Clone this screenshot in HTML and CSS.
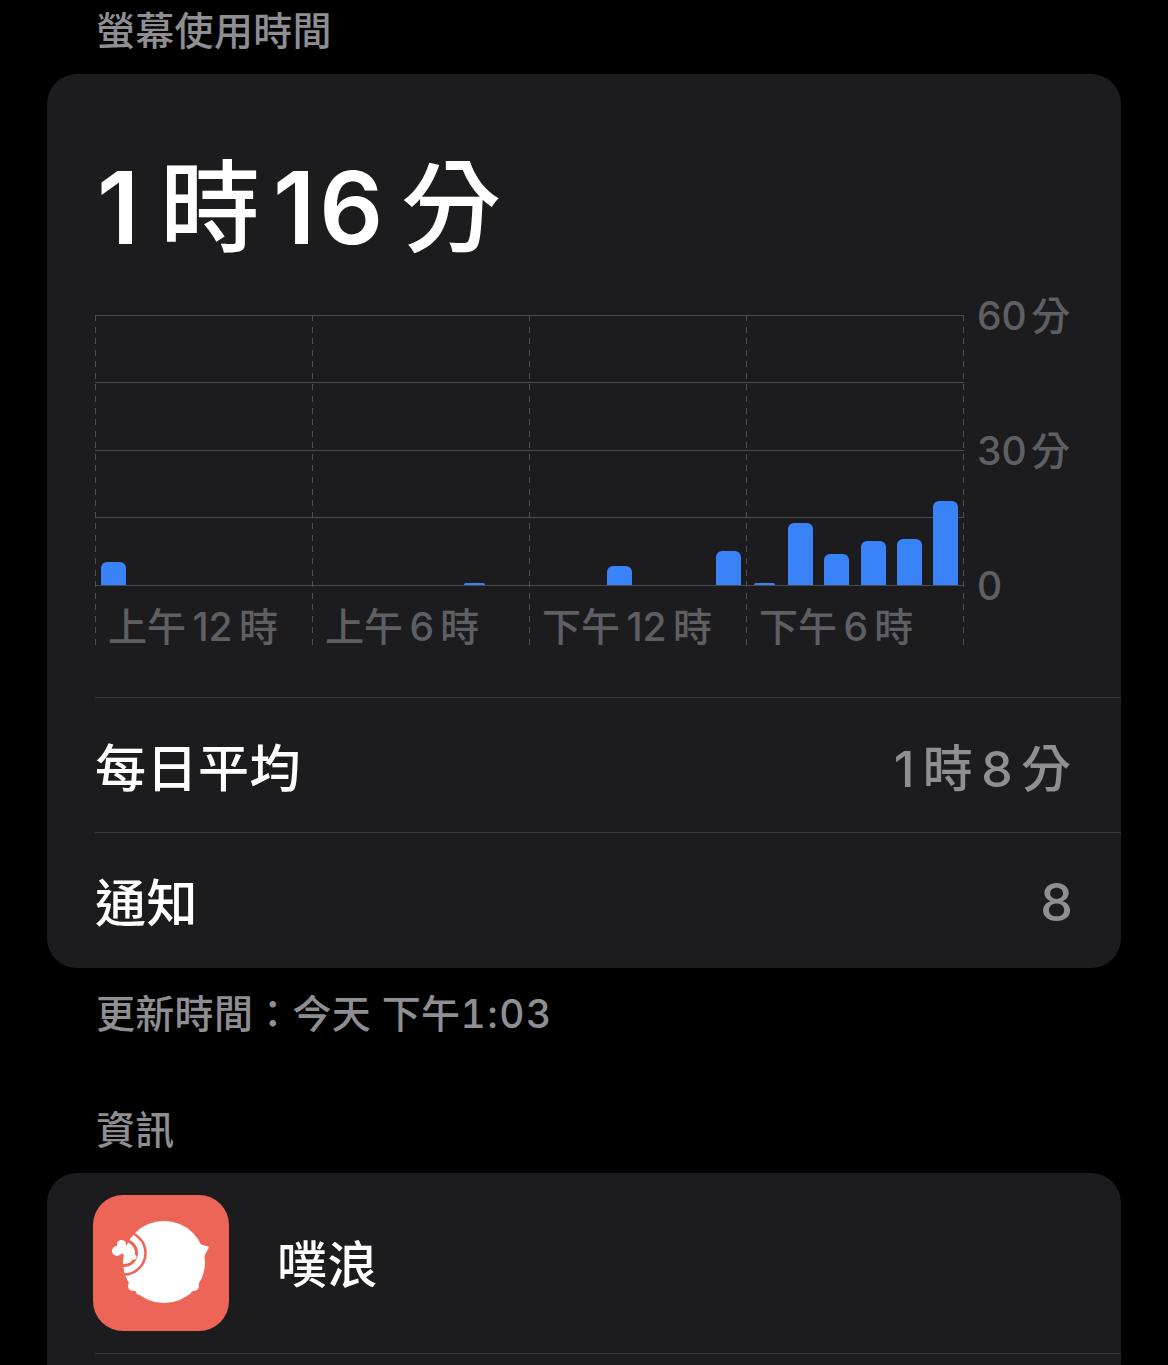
FILE: index.html
```html
<!DOCTYPE html>
<html lang="zh-Hant">
<head>
<meta charset="utf-8">
<title>螢幕使用時間</title>
<link rel="stylesheet" href="styles.css">
</head>
<body>
<main class="page">
  <h2 class="section-title first">螢幕使用時間</h2>
  <section class="card usage">
    <div class="total"><span class="one">1</span><span class="cjk">時</span><span class="num">16</span><span class="unit">分</span></div>
    <div class="chart">
      <div class="stage">
        <div class="hlines"><i></i><i></i><i></i><i></i></div>
        <div class="vlines"><i></i><i></i><i></i><i></i></div>
        <div class="bars">
          <b class="bar" style="--c:1;--h:23px"></b>
          <b class="bar thin" style="--c:11;--h:2px"></b>
          <b class="bar" style="--c:15;--h:19px"></b>
          <b class="bar" style="--c:18;--h:34px"></b>
          <b class="bar thin" style="--c:19;--h:2px"></b>
          <b class="bar" style="--c:20;--h:62px"></b>
          <b class="bar" style="--c:21;--h:31px"></b>
          <b class="bar" style="--c:22;--h:44px"></b>
          <b class="bar" style="--c:23;--h:46px"></b>
          <b class="bar" style="--c:24;--h:84px"></b>
        </div>
        <div class="xlabels">
          <span>上午 12 時</span><span>上午 6 時</span><span>下午 12 時</span><span>下午 6 時</span>
        </div>
      </div>
      <div class="yaxis">
        <span>60 分</span><span>30 分</span><span>0</span>
      </div>
    </div>
    <div class="row first-row"><span class="row-label">每日平均</span><span class="row-value">1 時 8 分</span></div>
    <div class="row"><span class="row-label">通知</span><span class="row-value solo">8</span></div>
  </section>
  <p class="footnote">更新時間：今天 下午<span class="clock">1:03</span></p>
  <h2 class="section-title info">資訊</h2>
  <section class="card app">
    <div class="app-row">
      <svg class="app-icon" viewBox="0 0 136 136" aria-hidden="true">
        <rect width="136" height="136" rx="30" fill="#ec6557"/>
        <path d="M107 49l9 3-5 10z" fill="#fff"/>
        <circle cx="40" cy="91" r="5" fill="#fff"/>
        <circle cx="47" cy="96" r="4" fill="#fff"/>
        <circle cx="101" cy="91" r="5" fill="#fff"/>
        <circle cx="94" cy="96" r="4" fill="#fff"/>
        <circle cx="71" cy="67" r="41" fill="#fff"/>
        <circle cx="31" cy="58" r="21.500" fill="none" stroke="#ec6557" stroke-width="2.500"/>
        <circle cx="31" cy="58" r="12.500" fill="none" stroke="#ec6557" stroke-width="3"/>
        <path d="M32 56l9 6" stroke="#fff" stroke-width="5" stroke-linecap="round"/>
        <circle cx="24" cy="56" r="5" fill="#fff"/>
        <circle cx="28.500" cy="49.500" r="4.500" fill="#fff"/>
        <circle cx="32" cy="55" r="4.500" fill="#fff"/>
      </svg>
      <span class="app-name">噗浪</span>
    </div>
    <div class="app-rule"></div>
  </section>
</main>
</body>
</html>
```

FILE: styles.css
```css
* { box-sizing: border-box; }

html, body {
  margin: 0;
  height: 100%;
  overflow: hidden;
  background: #000;
}

body {
  font-family: Inter, "Noto Sans CJK TC", sans-serif;
  color: #fff;
}

.page {
  display: flex;
  flex-direction: column;
  height: 1365px;
  padding: 0 47px;
}

.section-title {
  margin: 0;
  padding-left: 49px;
  font-size: 39px;
  line-height: 50px;
  font-weight: 500;
  letter-spacing: .3px;
  color: #8e8e93;
}

.section-title.first { margin-top: 6px; margin-bottom: 18px; }
.section-title.info { margin-top: 66px; margin-bottom: 18px; }

.card {
  background: #1c1c1e;
  border-radius: 30px;
}

.usage {
  height: 894px;
  padding: 74px 0 0 48px;
}

.total {
  display: flex;
  align-items: baseline;
  height: 120px;
  font-size: 100px;
  line-height: 120px;
  font-weight: 500;
}

.total .one { width: 65px; padding-left: 2px; font-weight: 600; }
.total .cjk { width: 111px; }
.total .num { width: 130px; padding-left: 2px; letter-spacing: 4px; font-weight: 600; }

.chart {
  display: flex;
  margin-top: 47px;
  height: 382px;
}

.stage {
  display: grid;
  grid-template-columns: 869px;
  grid-template-rows: 271px 59px;
  width: 869px;
  height: 330px;
}

.hlines {
  grid-area: 1 / 1;
  display: grid;
  grid-template-rows: 67px 68px 67px 68px 1px;
}

.hlines i { border-top: 1px solid #4b4b4e; }

.hlines::after {
  content: "";
  background: #4b4b4e;
}

.vlines {
  grid-area: 1 / 1 / 3 / 2;
  display: grid;
  grid-template-columns: repeat(4, 217px) 1px;
}

.vlines i,
.vlines::after {
  background: repeating-linear-gradient(to bottom, #4f4f52 0 6px, transparent 6px 11.570px) left top / 1px 100% no-repeat;
}

.vlines::after { content: ""; }

.bars {
  grid-area: 1 / 1;
  display: grid;
  grid-template-columns: repeat(24, 1fr);
  align-items: end;
  justify-items: center;
  padding: 0 .5px 1px 0;
}

.bar {
  grid-column: var(--c);
  grid-row: 1;
  display: block;
  width: 25px;
  height: var(--h);
  background: #3a82f7;
  border-radius: 6px 6px 0 0;
}

.bar.thin { width: 21px; border-radius: 4px 4px 0 0; }

.xlabels {
  grid-area: 2 / 1;
  display: grid;
  grid-template-columns: repeat(4, 217px);
  align-items: center;
  padding-top: 22px;
  font-size: 39px;
  line-height: 38px;
  font-weight: 500;
  color: #5f5f63;
  white-space: nowrap;
  word-spacing: -4px;
}

.xlabels span { padding-left: 13px; }

.yaxis {
  display: grid;
  grid-template-rows: repeat(3, 1px);
  row-gap: 134px;
  align-items: center;
  height: 271px;
  margin-left: 13px;
  font-size: 39px;
  line-height: 1px;
  font-weight: 500;
  color: #5f5f63;
  white-space: nowrap;
  word-spacing: -6px;
}

.row {
  display: flex;
  align-items: center;
  justify-content: space-between;
  height: 135px;
  padding-right: 50px;
  border-top: 1px solid #38383a;
}

.row-label {
  font-size: 51px;
  font-weight: 500;
  letter-spacing: .5px;
}

.row-value {
  font-size: 50px;
  font-weight: 500;
  color: #8e8e93;
  word-spacing: -5px;
}

.row-value.solo {
  margin-right: -2px;
  padding-top: 4px;
  font-size: 52px;
}

.footnote {
  margin: 21px 0 0;
  padding-left: 49px;
  font-size: 39px;
  line-height: 50px;
  font-weight: 500;
  letter-spacing: .3px;
  color: #8e8e93;
}

.clock { letter-spacing: 1.500px; font-variant-numeric: tabular-nums; }

.app-row {
  display: flex;
  align-items: center;
  gap: 48px;
  height: 180px;
  padding-left: 46px;
}

.app-icon {
  width: 136px;
  height: 136px;
  flex: none;
}

.app-name {
  padding-bottom: 4px;
  font-size: 50px;
  font-weight: 500;
  letter-spacing: .5px;
}

.app-rule {
  height: 1px;
  margin-left: 48px;
  background: #38383a;
}

.app {
  flex: 1;
  min-height: 0;
  border-radius: 30px 30px 0 0;
}
```
